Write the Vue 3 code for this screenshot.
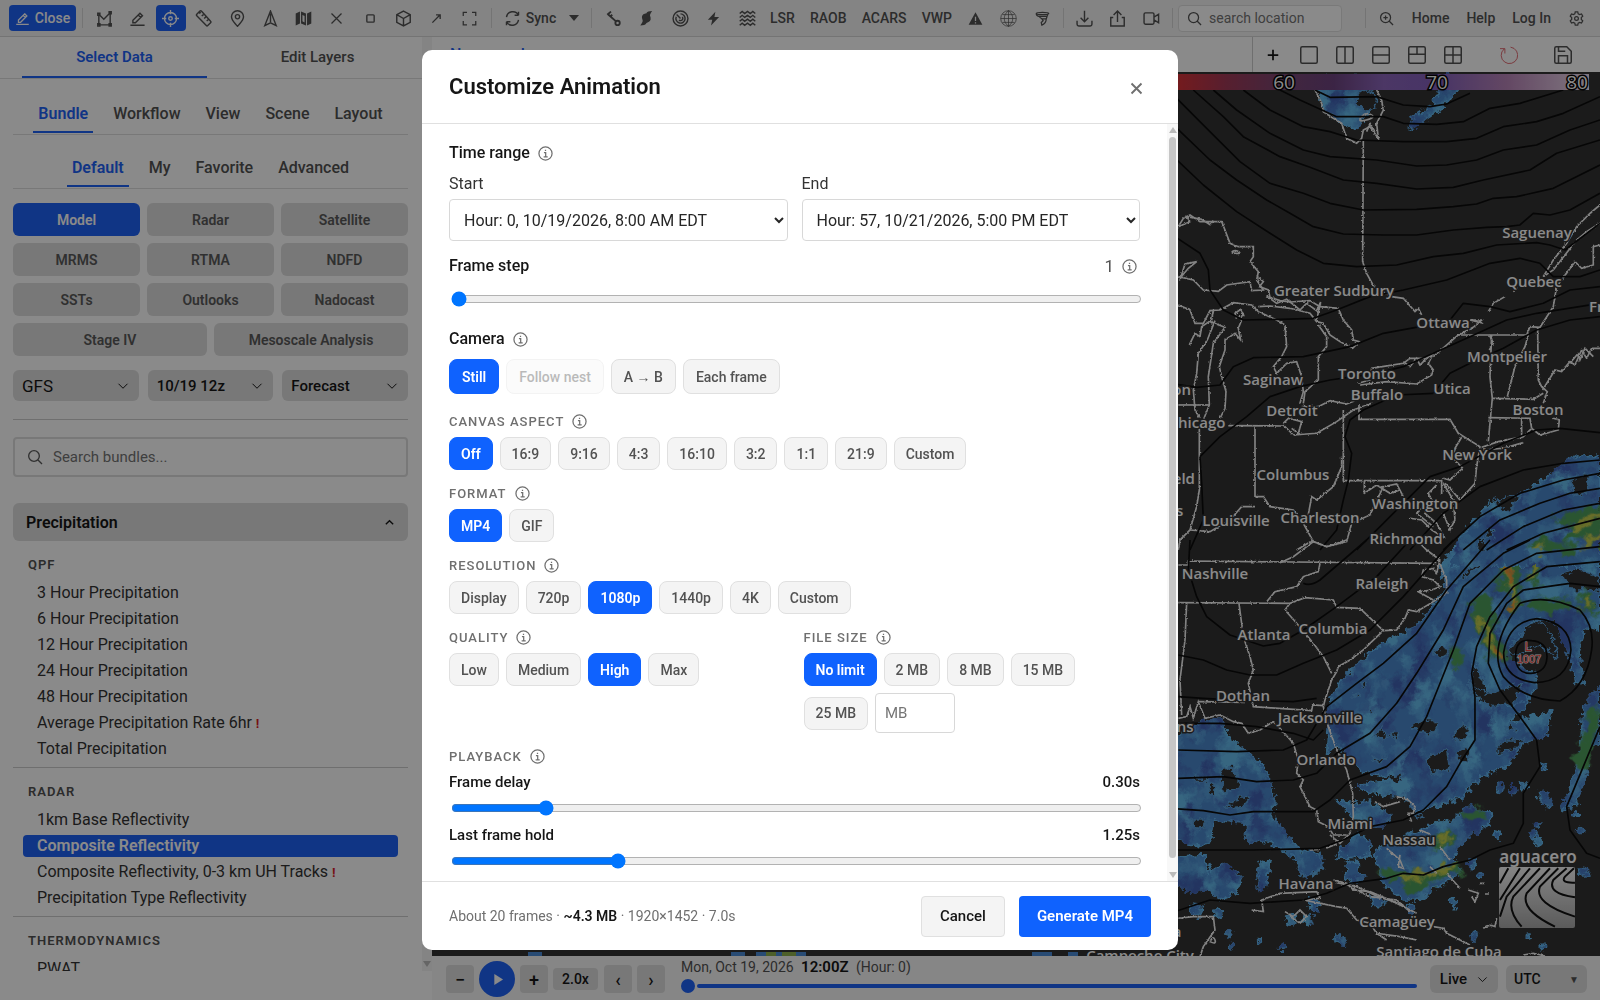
<script setup>
import { ref } from 'vue'

const icons = {
  pen: 'M15.500 4.500l3.500 3.500L9 18H5.500v-3.500zM13 7l3.500 3.500M2 21.500h20',
  area: 'M4 21V6M4 6l7 7 9-9v17H4M2.500 4.500h3v3h-3zM18.500 2.500h3v3h-3zM2.500 19.500h3v3h-3zM18.500 19.500h3v3h-3z',
  target: 'M12 3.500a8.500 8.500 0 1 0 0 17a8.500 8.500 0 1 0 0-17M12 0v6M12 18v6M0 12h6M18 12h6M12 9.500a2.500 2.500 0 1 0 0 5a2.500 2.500 0 1 0 0-5',
  ruler: 'M7 1.500L2.500 6q-1 1 0 2l13.500 14q1 1 2 0l4-4q1-1 0-2L9 1.500q-1-1-2 0zM9.500 8.500l2.500-2M13 12l2.500-2.500M16.500 15.500l2.500-2M6 5l2-2',
  pin: 'M12 23c-4-5-8.500-8.500-8.500-13.500a8.500 8.500 0 0 1 17 0C20.500 14.500 16 18 12 23zM12 6.500a3 3 0 1 0 0 6a3 3 0 1 0 0-6',
  north: 'M12 1.500L4 22l8-4 8 4zM12 5v12',
  cross: 'M4 4l16 16M20 4L4 20',
  square: 'M6 4h12a2 2 0 0 1 2 2v12a2 2 0 0 1-2 2H6a2 2 0 0 1-2-2V6a2 2 0 0 1 2-2z',
  cube: 'M12 1.500l9.500 5v11l-9.500 5-9.500-5v-11zM2.500 6.500l9.500 5.500 9.500-5.500M12 12v10.500',
  arrow: 'M3 21L20 4M11 4h9v9',
  frame: 'M8 2H2v6M16 2h6v6M8 22H2v-6M16 22h6v-6',
  sync: 'M3.500 10a9 9 0 0 1 17-2.500V2.500M20.500 7.500h-5.500M20.500 14a9 9 0 0 1-17 2.500v5M3.500 16.500h5.500',
  radar: 'M12 1.500a10.500 10.500 0 1 0 0 21a10.500 10.500 0 1 0 0-21M12 5.500a6.500 6.500 0 1 1-6 4M12 12L6.500 6.500M14.500 10a3 3 0 1 1-4.500 4',
  waves: 'M1 5l3.500-3 3.500 3 4-3 4 3 3.500-3 3.500 3M1 10.500l3.500-3 3.500 3 4-3 4 3 3.500-3 3.500 3M1 16l3.500-3 3.500 3 4-3 4 3 3.500-3 3.500 3M1 21.500l3.500-3 3.500 3 4-3 4 3 3.500-3 3.500 3',
  gauge: 'M4 6l12.500 11M2 6l6-5M6 9.500l4-3.500M18.500 15.500a3.500 3.500 0 1 0 0 7a3.500 3.500 0 1 0 0-7',
  globe: 'M12 1a11 11 0 1 0 0 22a11 11 0 1 0 0-22M12 1v22M1 12h22M12 1c-8 6-8 16 0 22M12 1c8 6 8 16 0 22M3.500 6.500h17M3.500 17.500h17',
  tornado: 'M2 4c0-2.500 20-2.500 20 0s-20 2.500-20 0c0 3 2 4 4 4.500h13l2.500-4.500M7 8.500c0 2 2 3 4 4h7l1.500-4M11 12.500l2 3-3 3 1 4c5-2 7-5 7-10',
  download: 'M12 1v15M6.500 11l5.500 5.500L17.500 11M1.500 15v5q0 2.500 2.500 2.500h16q2.500 0 2.500-2.500v-5',
  upload: 'M12 17V2M6.500 7L12 1.500 17.500 7M6 10.500H2.500v12h19v-12H18',
  video: 'M3.500 4h10q2 0 2 2v12q0 2-2 2h-10q-2 0-2-2V6q0-2 2-2zM15.500 10l6.500-4v12l-6.500-4',
  search: 'M10.500 2.500a8 8 0 1 0 0 16a8 8 0 1 0 0-16M16.500 16.500l6 6',
  zoomIn: 'M10.500 2.500a8 8 0 1 0 0 16a8 8 0 1 0 0-16M16.500 16.500l6 6M10.500 7v7M7 10.500h7',
  gear: 'M10 1.500h4l.7 3 2.300 1.300 3-1 2 3.500-2.300 2.200v3l2.300 2.200-2 3.500-3-1-2.300 1.300-.7 3h-4l-.7-3L7 18.200l-3 1-2-3.500L4.300 13.500v-3L2 8.300l2-3.500 3 1L9.300 4.500zM12 9a3 3 0 1 0 0 6a3 3 0 1 0 0-6',
  info: 'M12 1.500a10.500 10.500 0 1 0 0 21a10.500 10.500 0 1 0 0-21M9.500 10.500h2.800V17M9 17.500h6.500M12 6v2',
  chevron: 'M3 7.500l9 9 9-9',
  chevronUp: 'M4 16l8-8 8 8',
  plus: 'M12 3v18M3 12h18',
  one: 'M3 1h18q2 0 2 2v18q0 2-2 2H3q-2 0-2-2V3q0-2 2-2z',
  cols: 'M3 1h18q2 0 2 2v18q0 2-2 2H3q-2 0-2-2V3q0-2 2-2zM12 1v22',
  rows: 'M3 1h18q2 0 2 2v18q0 2-2 2H3q-2 0-2-2V3q0-2 2-2zM1 12h22',
  three: 'M3 1h18q2 0 2 2v18q0 2-2 2H3q-2 0-2-2V3q0-2 2-2zM1 11h22M12 1v10',
  four: 'M3 1h18q2 0 2 2v18q0 2-2 2H3q-2 0-2-2V3q0-2 2-2zM1 12h22M12 1v22',
  reset: 'M5.500 4A11 11 0 1 0 14 1.500M0 3.500h6.500v6.500',
  save: 'M3 1h14l6 6v14q0 2-2 2H3q-2 0-2-2V3q0-2 2-2zM6 23V13h12v10M6 1v6h9'
}
const solids = {
  map: 'M1 5l6-3v17l-6 3zM8.500 2l7 3v17l-7-3zM17 5l6-3v17l-6 3zM10.500 7v9l3 1.500v-9z',
  hurricane: 'M21 0c-5 0-8 1-9.500 4-5 0-7.500 3.500-6.500 8 .5 3 1.500 3 .5 5.500-1 2-2 4-3.500 5.500 5 0 8.500-1 10-4 5-1 7.500-4 6.500-8.500-.5-3-1.500-3.500-.5-5.500.6-1.500 1.500-3 3-5z',
  bolt: 'M15 1L3 14h7l-2 9L21 9.500h-7.500z',
  warning: 'M12 2L1 22h22zM11 9h2v7h-2zM11 18h2v2h-2z'
}

const drawTools = ['area', 'pen', 'target', 'ruler', 'pin', 'north', 'map', 'cross', 'square', 'cube', 'arrow', 'frame']
const dataTools = ['gauge', 'hurricane', 'radar', 'bolt', 'waves']
const products = ['LSR', 'RAOB', 'ACARS', 'VWP']
const hazardTools = ['warning', 'globe', 'tornado']
const shareTools = ['download', 'upload', 'video']
const layouts = ['one', 'cols', 'rows', 'three', 'four']

const mainTabs = ['Bundle', 'Workflow', 'View', 'Scene', 'Layout']
const subTabs = ['Default', 'My', 'Favorite', 'Advanced']
const sources = ['Model', 'Radar', 'Satellite', 'MRMS', 'RTMA', 'NDFD', 'SSTs', 'Outlooks', 'Nadocast']
const wideSources = ['Stage IV', 'Mesoscale Analysis']
const sections = [
  { title: 'QPF', items: ['3 Hour Precipitation', '6 Hour Precipitation', '12 Hour Precipitation', '24 Hour Precipitation', '48 Hour Precipitation', 'Average Precipitation Rate 6hr', 'Total Precipitation'] },
  { title: 'RADAR', items: ['1km Base Reflectivity', 'Composite Reflectivity', 'Composite Reflectivity, 0-3 km UH Tracks', 'Precipitation Type Reflectivity'] },
  { title: 'THERMODYNAMICS', items: ['PWAT'] }
]
const flagged = ['Average Precipitation Rate 6hr', 'Composite Reflectivity, 0-3 km UH Tracks']
const activeItem = ref('Composite Reflectivity')

const camera = ref('Still')
const cameras = ['Still', 'Follow nest', 'A → B', 'Each frame']
const aspect = ref('Off')
const aspects = ['Off', '16:9', '9:16', '4:3', '16:10', '3:2', '1:1', '21:9', 'Custom']
const format = ref('MP4')
const formats = ['MP4', 'GIF']
const resolution = ref('1080p')
const resolutions = ['Display', '720p', '1080p', '1440p', '4K', 'Custom']
const quality = ref('High')
const qualities = ['Low', 'Medium', 'High', 'Max']
const fileSize = ref('No limit')
const fileSizes = ['No limit', '2 MB', '8 MB', '15 MB', '25 MB']
const frameStep = ref(1)
const frameDelay = ref(30)
const lastHold = ref(125)

const cities = [
  ['Saguenay', 1537, 238], ['Quebec', 1534, 287], ['Greater Sudbury', 1334, 296], ['Ottawa', 1443, 328],
  ['Montpelier', 1507, 362], ['Toronto', 1367, 379], ['Saginaw', 1273, 385], ['Buffalo', 1377, 400],
  ['Utica', 1452, 394], ['Detroit', 1292, 416], ['Boston', 1538, 415], ['New York', 1477, 460],
  ['Columbus', 1293, 480], ['Washington', 1415, 509], ['Louisville', 1236, 526], ['Charleston', 1320, 523],
  ['Richmond', 1406, 544], ['Nashville', 1215, 579], ['Raleigh', 1382, 589], ['Atlanta', 1264, 640],
  ['Columbia', 1333, 634], ['Dothan', 1243, 701], ['Jacksonville', 1320, 723], ['Orlando', 1326, 765],
  ['Miami', 1350, 829], ['Nassau', 1409, 845], ['Havana', 1306, 889], ['Camagüey', 1397, 927],
  ['Santiago de Cuba', 1439, 957], ['Chicago', 1197, 428], ['Madison', 1160, 395], ['Springfield', 1156, 484],
  ['St. Louis', 1153, 516], ['New Orleans', 1147, 732], ['Mérida', 1156, 937], ['Campeche City', 1140, 961],
  ['Fredericton', 1631, 312]
]

const northContours = [
  'M435 0L480 22 620 20 700 45 780 50 830 42 900 10', 'M330 0L390 30 500 80 640 80 700 100 800 103 880 95 960 55 1050 40 1180 0',
  'M220 0L300 60 400 110 480 125 560 150 700 155 830 155 920 145 1000 110 1100 95 1180 70 1290 20',
  'M130 0L200 60 300 130 400 180 480 200 620 210 740 228 830 225 920 210 1000 180 1100 165 1200 120 1290 90',
  'M70 0L160 80 220 140 330 200 420 232 520 270 620 280 740 297 850 292 940 270 1080 240 1160 190 1290 150',
  'M0 5L110 115 210 215 300 280 400 310 480 340 580 360 740 358 850 350 920 342 970 325 1040 320 1150 295 1290 225',
  'M0 95L120 210 200 270 290 330 360 370 430 410 520 432 640 435 740 435 850 420 950 412 1010 410 1050 405 1090 370 1140 375 1200 360 1290 310',
  'M0 190L100 285 200 365 300 430 380 480 460 520 560 530 680 525 790 500 880 490 980 465 1100 458 1140 465 1185 480 1290 400',
  'M0 430L90 490 115 540 120 600 160 660 220 690 330 688 430 685 500 660 600 620 700 600 830 570 960 520 1050 505 1110 520 1150 560 1230 560 1290 540',
  'M0 880L80 892 150 885 190 830 250 803 400 800 540 770 640 730 750 710 840 690 880 640 960 650 1020 665 1120 640 1200 600 1290 590',
  'M90 1100L150 1040 230 980 300 920 390 890 480 870 620 850 700 830 790 790 900 740 1010 690 1100 670 1290 640',
  'M790 910L840 850 900 820 1000 775 1100 720 1200 690 1290 680',
  'M790 910L680 915 580 960 540 990 525 1040 545 1090 535 1170 520 1230 500 1320 450 1380', 'M60 1380L100 1290 95 1180 90 1100',
  'M560 1380L640 1300 700 1240 780 1160 870 1130 1000 1060 1100 1020 1170 1015 1290 1028',
  'M720 1380L820 1270 930 1190 1060 1140 1180 1120 1290 1110', 'M820 1380L930 1280 1050 1210 1180 1170 1290 1150',
  'M880 1380L990 1290 1110 1240 1200 1210 1290 1195', 'M950 1380L1060 1310 1180 1260 1290 1240', 'M1010 1380L1120 1330 1290 1285'
]
const southContours = [
  'M60 0L55 90 80 170 110 230 180 285 280 318 330 310 400 270 500 200 620 110 720 0', 'M400 130Q420 140 450 120L590 0',
  'M25 345L100 360 170 390 240 405 320 405 400 370 500 330 600 270 700 170 850 0', 'M25 470L100 475 200 480 370 485 440 475',
  'M25 550L150 550 260 560 370 580 430 600 460 570', 'M25 630L200 635 340 630 410 600 470 500 560 430 640 370 740 280 830 150 960 0',
  'M25 715L160 710 260 725 370 720 440 700 500 640 600 580 680 490 740 400 820 270 880 140 1000 40 1080 0',
  'M0 805L100 812 180 825 250 815 430 815 480 780 540 720 650 680 720 620 770 530 790 480 850 330 900 190 1000 90 1100 40 1290 20',
  'M0 930L250 930 450 925 520 900 600 860 700 840 760 810 830 740 870 670 915 600 915 470 905 400 920 320 960 230 1030 140 1130 80 1290 65',
  'M0 1120L120 1080 240 1090 400 1080 470 1060 540 1030 650 1015 700 1000 760 1005 820 980 900 960 960 930 1030 910 1060 850 1060 760 1110 680 1100 600 1050 530 990 450 955 370 960 280 1010 190 1060 150 1200 130 1290 140',
  'M1085 302q48 4 46 50t-48 48-46-52 48-46', 'M1100 236q100 10 103 94-8 96-110 98-92-12-92-90 15-92 99-102',
  'M1050 190Q1130 160 1230 210 1275 260 1265 330 1250 440 1170 483 1060 480 1000 410 950 320 1050 190', 'M1290 560L1240 680 1190 800 1200 870 1250 940 1290 955'
]
const northBorders = [
  'M435 0L455 40 460 65 490 85 515 100 530 145 560 160 575 145 580 120 600 110 625 145 620 100 640 60 635 30 620 0', 'M575 80q12-14 28-6t-14 16-14-10', 'M590 125L600 100 615 125',
  'M580 150L578 515 590 550 612 590 665 620 700 625 735 665 745 655 755 675',
  'M25 410L40 385 60 375 90 395 155 395 165 420 180 460 205 470 250 470 250 500 240 515 265 545 260 570 280 600 245 602 240 575 170 585 145 604 100 600 70 570 25 560',
  'M30 570L45 522 80 515 55 535 30 565', 'M185 486q12-8 22 0t-22 2', 'M25 410L60 395 50 380 95 388 120 404 130 392',
  'M262 560L280 575 268 590 295 600 300 622 330 632 360 636 420 632 450 650 505 655 520 690 545 720 550 750 568 755 548 775 510 755 480 735 460 700 440 695 420 670 360 655 300 648 265 650',
  'M290 618L320 640 350 628 390 660 410 640 440 662 452 636 440 690', 'M25 645L60 660 75 700 100 700 120 662 150 660 190 638 245 645 265 665 320 690 345 705 350 770 335 800 310 830 320 850 350 820 380 815 395 860 400 905 390 940',
  'M130 660L125 690 95 710 90 740 75 730 58 765', 'M135 692L112 750 85 790 80 850 70 900 75 960 90 985', 'M215 690L205 715 212 750 195 730 165 750 165 780 148 830 155 860 168 905 165 955 150 985',
  'M120 695L165 712 130 760 115 860 118 945 100 990', 'M445 705L470 740 470 770 445 800 445 870 405 905 400 940', 'M195 670l18-12 8 18-22 8z',
  'M340 1005L370 1035 440 1030 500 995 550 960 605 940', 'M340 1000L355 985 395 995 385 1030 365 1015', 'M395 950L445 950 480 932 530 942 575 925',
  'M565 880L600 870 605 835 700 820 720 805 770 805 790 790 775 820 790 840 785 855 740 882 650 875 570 885', 'M700 815L720 830 740 805 750 825 775 800',
  'M790 800L865 735 910 712 935 690 900 690 940 700 M955 665L970 640 1005 620 M1030 605L1045 595 M1120 560L1150 510 1190 460 1220 410 1260 370 1290 345', 'M1120 560L1150 540 1220 450 1250 425 1290 400',
  'M865 735L1070 735 1080 710 1110 712 1150 650 1160 590 1215 515 1235 535 1270 525 1270 470 1290 465', 'M965 735L960 860 967 925 955 1055', 'M958 735L970 760 958 780',
  'M1075 735L1065 770 1035 830 1012 920', 'M1103 712L1105 870 1115 890 1132 905 1120 940', 'M967 925L1090 928 1120 910', 'M955 983L1080 985 1085 1015M1055 985V1045',
  'M935 1072L985 1055 1060 1040 1085 1015 1110 1035 1165 1020 1168 990 1150 985 M940 1080L1000 1075 1060 1058', 'M1118 900L1155 840 1175 845 1200 815 1215 825 1235 780 1250 805 1265 775 1290 775',
  'M1200 820L1225 790 1230 810 1245 775 1270 800', 'M567 945V988H840L865 1030 930 1070', 'M875 1042L855 1075 850 1105 878 1135 840 1170 820 1165', 'M520 960V1172H815L815 1212', 'M930 1070L920 1130 915 1180 870 1230 845 1200 825 1180',
  'M820 1180L850 1230 855 1290 840 1320 820 1270', 'M800 1185L775 1210 790 1240 765 1270 800 1300 825 1345 785 1320 755 1290 720 1285 M760 1250L740 1270 790 1310',
  'M25 945H118', 'M175 1007L340 1008', 'M255 1010V1220L280 1220 300 1250 370 1260 400 1300 430 1355 470 1370 530 1355 545 1300 600 1275 640 1190 680 1182 700 1220',
  'M88 1015V1200L80 1250 60 1320 30 1350 25 1380', 'M515 1100L515 1130 490 1190 440 1230 425 1220 410 1300', 'M583 1172V1210L620 1185 660 1210 690 1200', 'M430 1350L380 1380', 'M60 1320L120 1325 180 1290 215 1250 255 1250'
]
const southBorders = [
  'M25 75H55V63L800 70', 'M25 188L360 190 405 173 490 180 500 202 570 205 640 272', 'M330 68L370 50 430 5 470 20 530 0', 'M450 70L445 95 400 110 380 140 315 155 290 185',
  'M50 190L45 300 30 420 35 525', 'M207 190L220 290 240 350 250 390 235 430 250 500 425 512 428 495 460 497', 'M360 190L345 210 380 250 430 310 460 350 485 400', 'M85 485L225 487',
  'M740 0L770 30 790 45 810 60 800 100 790 85 760 90 755 110 790 120 810 140 785 150 745 155 790 180 M805 60L830 120 830 160 790 185 740 215 715 210 705 235 680 270 640 272 600 310 580 330 540 360 505 380 500 395 485 420 465 480 460 500 475 560 500 630 530 690 548 760 550 830 540 880 510 910 480 885',
  'M25 535L50 530 60 500 70 535 85 485 105 535 150 525 190 545 215 550 235 580 270 570 310 545 330 565 370 610 385 660 380 700 400 720 390 740 420 800 440 810 445 845 475 860 490 885 530 885',
  'M420 930L450 928M470 924L500 912', 'M245 1110L280 1115 275 1080 330 1060 440 1055 450 1075 400 1080 500 1100 530 1105 560 1140 600 1150 620 1180 650 1200', 'M345 1115L370 1130 390 1110 410 1130 390 1150 360 1130',
  'M490 1020L530 1030 550 1050 600 1055 660 1080 740 1120 M540 1040L600 1070 680 1080 720 1115', 'M500 1028L560 1040 620 1068 700 1095', 'M620 1180L690 1190 740 1200 M790 1160L820 1165 830 1180 900 1215', 'M25 1135L70 1130 130 1130 135 1170 100 1220 90 1250', 'M120 1205q10-20 15-5t-15 5',
  'M615 785L640 800 690 785 M680 770L715 780 735 800 730 820 715 820 725 845', 'M650 925L690 960 700 985 685 980 690 945', 'M750 870L780 882M810 920L840 960M780 980L800 1000M830 1000L870 1045', 'M895 1050L925 1060 915 1085 905 1070M930 1030h14M945 1062h12M940 1165q15-15 35-5l5-25M1060 1245l30-5 35 8'
]
const fields = [
  'M805 80L880 0 1290 -20 1290 270 1250 260 1225 330 1240 430 1215 430 1200 350 1150 240 1100 235 1060 270 1040 300 1010 345 1060 390 1100 395 1100 440 1070 480 1020 500 960 470 910 370 900 440 925 490 960 465 1060 450 1080 490 1010 550 1145 515 1130 590 1060 610 1010 680 930 710 880 770 800 800 730 810 690 740 700 700 640 710 570 690 540 650 500 620 470 640 480 470 540 390 620 320 700 280 760 235 830 150z',
  'M0 600L100 545 150 535 180 600 240 640 290 690 315 770 310 830 350 880 390 930 450 940 460 990 400 1010 370 950 300 910 230 900 230 850 130 840 120 910 70 920 0 880z',
  'M0 950L100 945 120 1000 160 970 215 1010 200 1060 150 1080 110 1050 70 1060 0 1030z', 'M500 780L560 790 600 780 660 830 640 860 570 860 550 830z', 'M560 740L600 725 680 720 720 750 700 770 600 760z',
  'M560 880L600 900 600 950 500 955 520 920z', 'M530 965h35v30l20 15-35 20-25-20z', 'M610 940L650 910 740 875 800 850 850 840 890 800 970 820 950 860 900 890 850 940 870 1000 800 1040 750 1080 700 1080 640 1030z',
  'M265 970l35-10-10 80-25 10z', 'M1240 500l50-60v170l-40 20v70l-30 90-40 20 50-160z', 'M415 1075h30v40l-25-10z', 'M60 1095l40 5-10 30-30-10z', 'M495 1185l35 10-10 25-25-15z', 'M600 1065l50 15-10 20-30-5z'
]
const gaps = [
  'M1175 100L1230 90 1290 110 1290 150 1200 150z', 'M920 70L940 20 960 60 890 110 850 130z', 'M790 335l30-15 15 20-20 12z', 'M725 555l50-20 30 15-20 30-40-5z', 'M860 570l20-20 15 25-15 25-30-5z', 'M610 590l25-25 15 25zM660 580l25 0-10 20z',
  'M770 650l60-20 10 60-60 10z', 'M860 640l30-20 10 30-30 20z', 'M980 620l30-20 50 0-30 30-50 10z', 'M1070 260l40-20 40 50 10 60-50-30-40 10-30 20-20-20z', 'M150 690l40-10 20 60-50 20z', 'M120 730h12v40h-12zM70 715h40v10H70z', 'M215 770l25 5-20 25-60 5z', 'M70 840l30 0 10 20-30 5z',
  'M900 430L950 460 1060 430 1030 490 970 500 930 480z', 'M575 430l15-5 5 10-15 5zM550 465l20-5 0 12zM595 500l15 10-10 10z', 'M740 820l20 10-20 10z', 'M1040 570l-30 10 10-30z', 'M610 655l40 0-20 15z'
]
const specks = [[990, 745, 12], [1120, 770, 16], [1135, 790, 10], [1185, 795, 12], [1105, 853, 8], [1090, 885, 11], [1105, 905, 9], [983, 887, 11], [905, 970, 13], [1240, 995, 13], [1230, 870, 10], [145, 1120, 14], [360, 1138, 14], [415, 1140, 14], [183, 1220, 9], [338, 1222, 9], [270, 1203, 7], [175, 1180, 10], [1030, 750, 10], [1060, 740, 9], [1122, 1220, 8], [1075, 1188, 6], [1120, 680, 8], [936, 1005, 7], [850, 1088, 12], [915, 1188, 12], [725, 1105, 12], [1215, 820, 7]]
</script>

<template>
  <div class="app">
    <header class="topbar">
      <button class="close-edit"><svg viewBox="0 0 24 24" class="ic"><path :d="icons.pen" /></svg>Close</button>
      <i class="sep"></i>
      <div class="tools draw">
        <button v-for="t in drawTools" :key="t" class="tool" :class="{ on: t === 'target' }" :aria-label="t">
          <svg viewBox="0 0 24 24" class="ic" :class="{ solid: solids[t], small: t === 'arrow' || t === 'square', mid: t === 'cross' || t === 'frame' }"><path :d="icons[t] || solids[t]" fill-rule="evenodd" /></svg>
        </button>
      </div>
      <i class="sep"></i>
      <button class="sync"><svg viewBox="0 0 24 24" class="ic"><path :d="icons.sync" /></svg>Sync<span class="caret"></span></button>
      <i class="sep"></i>
      <div class="tools data">
        <button v-for="t in dataTools" :key="t" class="tool" :aria-label="t">
          <svg viewBox="0 0 24 24" class="ic" :class="{ solid: solids[t], bold: t === 'gauge', mid: t === 'gauge' || t === 'hurricane' || t === 'bolt' }"><path :d="icons[t] || solids[t]" /></svg>
        </button>
      </div>
      <div class="products"><button v-for="p in products" :key="p">{{ p }}</button></div>
      <div class="tools hazards">
        <button v-for="t in hazardTools" :key="t" class="tool" :aria-label="t">
          <svg viewBox="0 0 24 24" class="ic" :class="{ solid: solids[t], fine: t === 'globe', mid: t !== 'globe' }"><path :d="icons[t] || solids[t]" fill-rule="evenodd" /></svg>
        </button>
      </div>
      <i class="sep"></i>
      <div class="tools share">
        <button v-for="t in shareTools" :key="t" class="tool" :aria-label="t"><svg viewBox="0 0 24 24" class="ic"><path :d="icons[t]" /></svg></button>
      </div>
      <i class="sep"></i>
      <label class="location"><svg viewBox="0 0 24 24" class="ic mid"><path :d="icons.search" /></svg><input type="text" placeholder="search location" aria-label="search location" /></label>
      <nav class="links">
        <i class="sep"></i>
        <button class="tool" aria-label="zoom in"><svg viewBox="0 0 24 24" class="ic mid"><path :d="icons.zoomIn" /></svg></button>
        <a href="#">Home</a><a href="#">Help</a><a href="#">Log In</a>
        <button class="tool gear" aria-label="settings"><svg viewBox="0 0 24 24" class="ic mid"><path :d="icons.gear" /></svg></button>
      </nav>
    </header>

    <div class="workspace">
      <aside class="sidebar">
        <div class="panel">
          <nav class="modes"><a href="#" class="on">Select Data</a><a href="#">Edit Layers</a></nav>
          <div class="panel-body">
            <nav class="tabs"><a v-for="(t, i) in mainTabs" :key="t" href="#" :class="{ on: i === 0 }">{{ t }}</a></nav>
            <nav class="tabs"><a v-for="(t, i) in subTabs" :key="t" href="#" :class="{ on: i === 0 }">{{ t }}</a></nav>
            <div class="sources">
              <button v-for="(s, i) in sources" :key="s" :class="{ on: i === 0 }">{{ s }}</button>
            </div>
            <div class="sources wide"><button v-for="s in wideSources" :key="s">{{ s }}</button></div>
            <div class="pickers">
              <button class="big">GFS<svg viewBox="0 0 24 24" class="ic"><path :d="icons.chevron" /></svg></button>
              <button>10/19 12z<svg viewBox="0 0 24 24" class="ic"><path :d="icons.chevron" /></svg></button>
              <button>Forecast<svg viewBox="0 0 24 24" class="ic"><path :d="icons.chevron" /></svg></button>
            </div>
            <label class="search"><svg viewBox="0 0 24 24" class="ic"><path :d="icons.search" /></svg><input type="text" placeholder="Search bundles..." aria-label="Search bundles" /></label>
            <button class="group">Precipitation<svg viewBox="0 0 24 24" class="ic"><path :d="icons.chevronUp" /></svg></button>
            <section v-for="s in sections" :key="s.title" class="bundle">
              <h3>{{ s.title }}</h3>
              <ul>
                <li v-for="item in s.items" :key="item" :class="{ on: item === activeItem }" @click="activeItem = item">{{ item }} <b v-if="flagged.includes(item)">!</b></li>
              </ul>
            </section>
          </div>
        </div>
        <div class="rail"><span class="down"></span></div>
      </aside>

      <main class="stage">
        <div class="viewbar">
          <span class="view-name">New panel</span>
          <div class="view-tools">
            <button class="tool add" aria-label="add view"><svg viewBox="0 0 24 24" class="ic bold"><path :d="icons.plus" /></svg></button>
            <button v-for="l in layouts" :key="l" class="tool" :aria-label="l"><svg viewBox="0 0 24 24" class="ic"><path :d="icons[l]" /></svg></button>
            <button class="tool reset" aria-label="reset"><svg viewBox="0 0 24 24" class="ic"><path :d="icons.reset" /></svg></button>
            <button class="tool save" aria-label="save"><svg viewBox="0 0 24 24" class="ic"><path :d="icons.save" /></svg></button>
          </div>
        </div>
        <svg class="map" viewBox="432 72 1168 884" preserveAspectRatio="xMaxYMin slice">
          <defs>
            <filter id="rough" x="-5%" y="-5%" width="110%" height="110%"><feTurbulence type="fractalNoise" baseFrequency="0.06" numOctaves="3" seed="4" /><feDisplacementMap in="SourceGraphic" scale="30" xChannelSelector="R" yChannelSelector="G" /></filter>
            <filter id="mottle" x="0" y="0" width="100%" height="100%" color-interpolation-filters="sRGB">
              <feTurbulence type="fractalNoise" baseFrequency="0.014 0.010" numOctaves="3" seed="21" result="n" />
              <feColorMatrix in="n" type="matrix" values="0 0 0 0 .40  0 0 0 0 .74  0 0 0 0 .93  4 0 0 0 -1.9" result="light" />
              <feColorMatrix in="n" type="matrix" values="0 0 0 0 .26  0 0 0 0 .38  0 0 0 0 .70  0 4 0 0 -1.9" result="dark" />
              <feComposite in="light" in2="SourceAlpha" operator="in" result="l" />
              <feComposite in="dark" in2="SourceAlpha" operator="in" result="d" />
              <feMerge><feMergeNode in="SourceGraphic" /><feMergeNode in="d" /><feMergeNode in="l" /></feMerge>
            </filter>
            <filter id="ragged" x="-5%" y="-5%" width="110%" height="110%"><feTurbulence type="fractalNoise" baseFrequency="0.15" numOctaves="2" seed="9" /><feDisplacementMap in="SourceGraphic" scale="8" xChannelSelector="R" yChannelSelector="G" /></filter>
            <filter id="soft" x="-20%" y="-20%" width="140%" height="140%"><feGaussianBlur stdDeviation="5" result="b" /><feTurbulence type="fractalNoise" baseFrequency="0.03" numOctaves="3" seed="2" result="n" /><feDisplacementMap in="b" in2="n" scale="60" xChannelSelector="R" yChannelSelector="G" /></filter>
            <linearGradient id="dbz" gradientUnits="userSpaceOnUse" x1="1178" x2="1589" y1="0" y2="0">
              <stop offset="0" stop-color="#d63238" /><stop offset=".12" stop-color="#a03a58" /><stop offset=".25" stop-color="#7a4672" /><stop offset=".38" stop-color="#6e4480" /><stop offset=".5" stop-color="#8c66bb" /><stop offset=".63" stop-color="#8460bc" /><stop offset=".8" stop-color="#b884b8" /><stop offset="1" stop-color="#ecdcec" />
            </linearGradient>
            <linearGradient id="stone" x1="0" x2="0" y1="0" y2="1"><stop offset="0" stop-color="#f5f5f5" /><stop offset="1" stop-color="#a9a9a9" /></linearGradient>
          </defs>
          <rect x="0" y="0" width="1600" height="1000" fill="#333" />
          <g transform="translate(1170 540) scale(.3333)">
            <g filter="url(#rough)">
              <g class="field" filter="url(#mottle)"><path v-for="f in fields" :key="f" :d="f" /><circle v-for="(s, i) in specks" :key="i" :cx="s[0]" :cy="s[1]" :r="s[2]" /></g>
              <g class="gap"><path v-for="f in gaps" :key="f" :d="f" /></g>
            </g>
            <g filter="url(#soft)" class="rain">
              <path class="g" d="M1000 130L1030 60 1035 200M1085 20L1095 120M1190 10L1290 40M920 210L940 260 975 340M940 180L960 280 1000 350M1245 170l10 40M860 340v30M1265 520v60M1255 590l-20 80M650 1000L760 1020 860 985M720 1040L760 1030M800 915L840 885M900 830l30-10M1190 190l-50 10-50-10" />
              <path class="y" d="M1015 80L1030 200M1090 40v70M1190 20l100 25M930 240L960 300 985 350M700 1015L850 985M810 905l25-20M1250 185v20" />
              <path class="o" d="M1020 90v30M1028 185v20M1205 40l15 0M985 335v20" />
            </g>
          </g>
          <g transform="translate(1170 90) scale(.3333)">
            <g filter="url(#rough)">
              <g class="field" filter="url(#mottle)">
                <path d="M435 -40H600L580 20 600 60 560 120 530 110 490 80 460 50z" /><path d="M830 -60L870 -10 820 50 740 110 718 115 725 85 780 50 810 0z" />
                <path d="M835 1430L870 1340 960 1240 1010 1230 1090 1190 1170 1130 1210 1100 1290 1095V1430z" />
              </g>
              <g class="gap"><path d="M980 1225L1050 1215 1020 1265 985 1250zM1215 1160l40-8 0 50-30 20-20-20zM950 1320h18v20h-18zM930 1350l12-10 5 40-25 10z" /><circle cx="590" cy="30" r="30" /></g>
            </g>
            <g filter="url(#soft)" class="rain"><path class="g" d="M1180 1290L1290 1260M1200 1340L1290 1300M1090 1360L1200 1380M1220 1290l40 60" /><path class="y" d="M1220 1310L1290 1275M1090 1372L1110 1380M1250 1360L1290 1330" /></g>
            <g filter="url(#ragged)" class="border"><path v-for="b in northBorders" :key="b" :d="b" /></g>
            <g class="contour"><path v-for="c in northContours" :key="c" :d="c" /></g>
          </g>
          <g transform="translate(1170 540) scale(.3333)">
            <g filter="url(#ragged)" class="border"><path v-for="b in southBorders" :key="b" :d="b" /></g>
            <g class="contour"><path v-for="c in southContours" :key="c" :d="c" /></g>
          </g>
          <path class="sliver" d="M528 954h14M731 954h14M756 954h50M1032 954h20M1068 954h10" />
          <path class="sliver green" d="M766 954h10M782 954h14" />
          <text v-for="c in cities" :key="c[0]" class="city" :x="c[1]" :y="c[2]">{{ c[0] }}</text>
          <text class="low" x="1528" y="651">L</text><text class="low num" x="1529" y="663">1007</text>
          <rect x="1000" y="74" width="589" height="16" fill="url(#dbz)" />
          <text class="dbz" x="1284" y="89">60</text><text class="dbz" x="1437" y="89">70</text><text class="dbz" x="1577" y="89">80</text>
          <text class="brand" x="1538" y="863">aguacero</text>
          <rect x="1499" y="867" width="76" height="61" rx="2" fill="url(#stone)" />
          <g transform="translate(1170 540) scale(.3333)" class="strata"><path d="M1015 985L990 1030M1050 985L990 1080M1080 985L1010 1070 990 1130M1110 985L1030 1070Q1010 1110 1055 1160M1140 985L1070 1060Q1050 1110 1155 1160M1165 985L1110 1040Q1090 1090 1215 1130M1190 985L1150 1020Q1130 1060 1215 1072M1212 985L1185 1010Q1170 1030 1215 1028" /></g>
        </svg>
        <footer class="playbar">
          <button class="step">−</button>
          <button class="play" aria-label="play"><svg viewBox="0 0 24 24"><path d="M8 5v14l11-7z" /></svg></button>
          <button class="step">+</button>
          <button class="speed">2.0x</button>
          <button class="step">‹</button>
          <button class="step">›</button>
          <div class="timeline">
            <p>Mon, Oct 19, 2026 <b>12:00Z</b> (Hour: 0)</p>
            <div class="track"><i class="knob"></i><i class="bar"></i></div>
          </div>
          <button class="live">Live<svg viewBox="0 0 24 24" class="ic"><path :d="icons.chevron" /></svg></button>
          <button class="utc">UTC<span>▼</span></button>
        </footer>
      </main>
    </div>

    <div class="overlay">
      <div class="dialog" role="dialog" aria-labelledby="dlg-title">
        <header class="dlg-head"><h2 id="dlg-title">Customize Animation</h2><button aria-label="close"><svg viewBox="0 0 24 24" class="ic"><path :d="icons.cross" /></svg></button></header>
        <div class="dlg-mid">
          <div class="dlg-body">
            <h3 class="head">Time range<svg viewBox="0 0 24 24" class="ic"><path :d="icons.info" /></svg></h3>
            <div class="range">
              <label>Start<select><option>Hour: 0, 10/19/2026, 8:00 AM EDT</option></select></label>
              <label>End<select><option>Hour: 57, 10/21/2026, 5:00 PM EDT</option></select></label>
            </div>
            <label class="head row" for="step"><span>Frame step</span><span class="value">{{ frameStep }}<svg viewBox="0 0 24 24" class="ic"><path :d="icons.info" /></svg></span></label>
            <input id="step" v-model="frameStep" class="slider step-slider" type="range" min="1" max="10" />
            <h3 class="head camera">Camera<svg viewBox="0 0 24 24" class="ic"><path :d="icons.info" /></svg></h3>
            <div class="chips tall"><button v-for="o in cameras" :key="o" :disabled="o === 'Follow nest'" :class="{ on: o === camera }" @click="camera = o">{{ o }}</button></div>
            <h4>CANVAS ASPECT<svg viewBox="0 0 24 24" class="ic"><path :d="icons.info" /></svg></h4>
            <div class="chips"><button v-for="o in aspects" :key="o" :class="{ on: o === aspect }" @click="aspect = o">{{ o }}</button></div>
            <h4>FORMAT<svg viewBox="0 0 24 24" class="ic"><path :d="icons.info" /></svg></h4>
            <div class="chips"><button v-for="o in formats" :key="o" :class="{ on: o === format }" @click="format = o">{{ o }}</button></div>
            <h4>RESOLUTION<svg viewBox="0 0 24 24" class="ic"><path :d="icons.info" /></svg></h4>
            <div class="chips"><button v-for="o in resolutions" :key="o" :class="{ on: o === resolution }" @click="resolution = o">{{ o }}</button></div>
            <div class="pair">
              <div>
                <h4>QUALITY<svg viewBox="0 0 24 24" class="ic"><path :d="icons.info" /></svg></h4>
                <div class="chips"><button v-for="o in qualities" :key="o" :class="{ on: o === quality }" @click="quality = o">{{ o }}</button></div>
              </div>
              <div>
                <h4>FILE SIZE<svg viewBox="0 0 24 24" class="ic"><path :d="icons.info" /></svg></h4>
                <div class="chips sizes"><button v-for="o in fileSizes" :key="o" :class="{ on: o === fileSize }" @click="fileSize = o">{{ o }}</button><input type="text" placeholder="MB" aria-label="File size in MB" /></div>
              </div>
            </div>
            <h4>PLAYBACK<svg viewBox="0 0 24 24" class="ic"><path :d="icons.info" /></svg></h4>
            <label class="row timing" for="delay"><span>Frame delay</span><span>{{ (frameDelay / 100).toFixed(2) }}s</span></label>
            <input id="delay" v-model="frameDelay" class="slider" type="range" min="5" max="200" />
            <label class="row timing" for="hold"><span>Last frame hold</span><span>{{ (lastHold / 100).toFixed(2) }}s</span></label>
            <input id="hold" v-model="lastHold" class="slider" type="range" min="5" max="513" />
          </div>
          <div class="scroller"><span class="up"></span><i></i><span class="down"></span></div>
        </div>
        <footer class="dlg-foot">
          <p>About 20 frames · <b>~4.3 MB</b> · 1920×1452 · 7.0s</p>
          <button class="cancel">Cancel</button><button class="go">Generate MP4</button>
        </footer>
      </div>
    </div>
  </div>
</template>

<style>
html, body { margin: 0; background: #fff; }
</style>

<style scoped>
* { box-sizing: border-box; }
.app { height: 100vh; display: flex; flex-direction: column; overflow: hidden; font-family: Roboto, "Noto Sans", sans-serif; font-size: 16px; color: #161616; }
button, input, select { font: inherit; color: inherit; margin: 0; }
button { border: 0; background: none; padding: 0; display: inline-flex; align-items: center; justify-content: center; white-space: nowrap; flex-shrink: 0; }
a { color: inherit; text-decoration: none; }
h2, h3, h4, p, ul { margin: 0; padding: 0; list-style: none; }
.ic { width: 16px; height: 16px; fill: none; stroke: currentColor; stroke-width: 2; flex-shrink: 0; }
.ic.solid { fill: currentColor; stroke: none; }
.ic.bold { stroke-width: 3; }
.ic.fine { stroke-width: 1; }

.topbar { height: 37px; flex-shrink: 0; display: flex; align-items: center; background: #f4f4f4; border-bottom: 1px solid #d6d6d6; padding-left: 9px; font-size: 14px; font-weight: 500; color: #525252; }
.topbar .ic { width: 17px; height: 17px; }
.topbar .ic.mid { width: 15px; height: 15px; }
.topbar .ic.small { width: 11px; height: 11px; stroke-width: 3; }
.topbar .close-edit .ic { width: 15px; height: 15px; }
.sep { width: 1px; height: 20px; background: #d6d6d6; flex-shrink: 0; }
.close-edit { width: 67px; height: 26px; gap: 5px; border-radius: 4px; background: #1f62f5; color: #fff; margin-right: 6px; }
.tools { display: flex; justify-content: space-between; flex-shrink: 0; }
.tool { width: 30px; height: 26px; border-radius: 4px; }
.tool.on { background: #1f62f5; color: #fff; }
.draw { width: 396px; margin: 0 6px; }
.sync { width: 99px; gap: 5px; }
.caret { border: 5px solid transparent; border-top: 6px solid #525252; border-bottom: 0; margin-left: 8px; }
.data { width: 164px; margin: 0 8px 0 6px; }
.products { width: 182px; display: flex; justify-content: space-between; flex-shrink: 0; }
.hazards { width: 97px; margin: 0 6px 0 8px; }
.share { width: 97px; margin: 0 6px 0 5px; }
.location { display: flex; align-items: center; gap: 7px; width: 164px; height: 27px; margin-left: 5px; padding-left: 8px; background: #fff; border: 1px solid #e0e0e0; border-radius: 4px; flex-shrink: 0; }
input { border: 0; outline: 0; background: none; min-width: 0; }
.location input { width: 120px; padding: 0; font-weight: 400; }
input::placeholder { color: #757575; opacity: 1; }
.links { margin-left: auto; display: flex; align-items: center; gap: 17px; padding-right: 9px; }
.links .sep { margin-right: -11px; }
.links .tool { margin-right: -7px; }
.links .gear { margin: 0 0 0 -7px; }

.workspace { flex: 1; min-height: 0; display: flex; }
.sidebar { width: 432px; flex-shrink: 0; display: flex; }
.panel { flex: 1; min-width: 0; height: 100%; padding-bottom: 29px; display: flex; flex-direction: column; }
.modes { height: 42px; flex-shrink: 0; display: flex; padding: 0 12px 0 22px; gap: 18px; border-bottom: 1px solid #dedede; font-size: 15px; font-weight: 500; color: #525252; }
.modes a { flex: 1; display: flex; align-items: center; justify-content: center; border-bottom: 2px solid transparent; }
.modes .on, .tabs .on { color: #1f62f5; border-bottom-color: #1f62f5; font-weight: 600; }
.panel-body { flex: 1; min-height: 0; overflow: hidden; padding: 16px 14px 0 13px; }
.tabs { height: 40px; display: flex; justify-content: center; gap: 15px; border-bottom: 1px solid #dedede; margin-bottom: 14px; font-weight: 500; color: #525252; }
.tabs a { padding: 0 5px; display: flex; align-items: center; height: 38px; border-bottom: 2px solid transparent; }
.sources { display: grid; grid-template-columns: repeat(3, 1fr); gap: 7px; font-size: 14px; font-weight: 600; color: #5a5a5a; }
.sources.wide { grid-template-columns: 1fr 1fr; margin-top: 7px; }
.sources button, .pickers button { height: 33px; background: #dedede; border-radius: 6px; }
.sources .on { background: #1f62f5; color: #fff; }
.pickers { display: grid; grid-template-columns: repeat(3, 1fr); gap: 9px; margin-top: 14px; padding-bottom: 18px; border-bottom: 1px solid #cecece; font-size: 15px; font-weight: 500; }
.pickers button { height: 31px; justify-content: space-between; padding: 0 10px 0 9px; }
.pickers .big { font-size: 17px; font-weight: 400; }
.pickers .ic { width: 12px; height: 12px; }
.search { display: flex; align-items: center; gap: 10px; height: 40px; margin-top: 17px; border: 2px solid #dedede; border-radius: 4px; padding-left: 12px; font-size: 15px; color: #5a5a5a; }
.search input { flex: 1; padding: 0; }
.group { display: flex; width: 100%; height: 38px; margin-top: 26px; padding: 0 13px; justify-content: space-between; background: #dedede; border-radius: 6px; font-weight: 600; }
.group .ic { width: 11px; height: 11px; stroke-width: 3; }
.bundle { border-bottom: 1px solid #cecece; padding-bottom: 3px; }
.bundle h3 { font-size: 13px; line-height: 18px; font-weight: 600; letter-spacing: 1px; color: #525252; padding: 15px 0 6px 15px; }
.bundle li { height: 22px; line-height: 22px; margin: 2px 10px 4px; padding-left: 14px; border-radius: 4px; color: #333; white-space: nowrap; }
.bundle .on { background: #1f62f5; color: #fff; font-weight: 600; }
.bundle b { color: #da1e28; font-size: 13px; }
.rail { width: 10px; margin-bottom: 29px; background: #f4f4f4; display: flex; align-items: flex-end; justify-content: center; padding-bottom: 4px; }
.up, .down { border: 4px solid transparent; }
.down { border-top: 6px solid #bbb; border-bottom: 0; }
.up { border-bottom: 6px solid #bbb; border-top: 0; }

.stage { flex: 1; min-width: 0; display: flex; flex-direction: column; }
.viewbar { height: 35px; flex-shrink: 0; display: flex; justify-content: space-between; align-items: center; padding-left: 18px; color: #525252; }
.view-name { color: #1f62f5; font-weight: 500; }
.view-tools { height: 100%; display: flex; align-items: center; border-left: 1px solid #cecece; padding: 0 22px 0 5px; gap: 6px; }
.view-tools .ic { width: 18px; height: 18px; }
.view-tools .add { color: #161616; }
.view-tools .add .ic { width: 14px; height: 14px; }
.view-tools .reset { color: #da3e48; margin: 0 18px 0 20px; }
.view-tools .reset .ic { stroke-width: 1; }
.map { flex: 1; min-height: 0; width: 100%; display: block; }
.field { fill: #4b88cc; stroke: #62b5ee; stroke-width: 5; }
.gap { fill: #333; stroke: #5a9fd8; stroke-width: 5; }
.rain path { fill: none; stroke-linecap: round; stroke-linejoin: round; }
.rain .g { stroke: #4f9e5c; stroke-width: 36; }
.rain .y { stroke: #c4cc4c; stroke-width: 18; }
.rain .o { stroke: #f08a30; stroke-width: 12; }
.border path { fill: none; stroke: #f0f0f0; stroke-width: 5; }
.contour path { fill: none; stroke: #0c0c0c; stroke-width: 5; stroke-linejoin: round; }
.strata path { fill: none; stroke: #111; stroke-width: 6; }
.sliver { stroke: #4b8bd6; stroke-width: 4; }
.sliver.green { stroke: #8fb04c; }
text { text-anchor: middle; paint-order: stroke; stroke: #333; stroke-width: 3px; }
.city { font: 600 15px "Open Sans", sans-serif; fill: #fff; }
.low { font: 13px "Liberation Sans", sans-serif; fill: #f04040; stroke: #fff; stroke-width: 1px; }
.low.num { font-size: 11px; }
.dbz { font: 19px "Open Sans", sans-serif; fill: #fff; stroke: #000; stroke-width: 3px; }
.brand { font: 600 17px "Noto Sans", sans-serif; fill: #fff; }

.playbar { height: 44px; flex-shrink: 0; display: flex; align-items: center; padding: 2px 13px 0 14px; background: #f8f8f8; font-size: 15px; font-weight: 500; }
.step { width: 28px; height: 28px; background: #dedede; border-radius: 4px; font-size: 18px; }
.play { width: 36px; height: 36px; border-radius: 50%; background: #1f62f5; margin: 0 5px; }
.play svg { width: 19px; height: 19px; fill: #fff; }
.speed { width: 45px; height: 22px; margin: 0 6px 0 5px; background: #dedede; border-radius: 4px; font-size: 14px; }
.speed + .step { margin-right: 5px; }
.timeline { flex: 1; margin: 0 13px 0 16px; font-size: 14px; font-weight: 400; color: #525252; align-self: flex-start; }
.timeline p { line-height: 18px; }
.timeline b { margin: 0 4px; color: #161616; font-size: 15px; font-weight: 600; }
.track { display: flex; align-items: center; gap: 2px; height: 20px; }
.knob { width: 14px; height: 14px; border-radius: 50%; background: #1f62f5; }
.bar { flex: 1; height: 4px; background: #1f62f5; border-radius: 2px; }
.live, .utc { height: 28px; background: #dedede; border-radius: 6px; }
.live { width: 68px; gap: 10px; margin-right: 8px; }
.live .ic { width: 11px; height: 11px; }
.utc { width: 81px; justify-content: space-between; padding: 0 8px; font-size: 14px; }
.utc span { font-size: 10px; color: #525252; }

.overlay { position: fixed; inset: 0; display: flex; align-items: center; justify-content: center; background: rgba(0, 0, 0, .46); }
.dialog { width: min(756px, 96vw); height: 90vh; display: flex; flex-direction: column; background: #fff; border-radius: 10px; overflow: hidden; }
.dlg-head { height: 74px; flex-shrink: 0; display: flex; align-items: center; justify-content: space-between; padding: 0 34px 0 27px; border-bottom: 1px solid #e0e0e0; }
.dlg-head h2 { font-size: 22px; font-weight: 600; color: #161616; }
.dlg-head button { color: #6f6f6f; margin-top: 4px; }
.dlg-head .ic { width: 15px; height: 15px; stroke-width: 3; }
.dlg-mid { flex: 1; min-height: 0; display: flex; }
.dlg-body { flex: 1; min-width: 0; overflow: hidden; padding: 18px 27px 0; }
.scroller { width: 11px; background: #f8f8f8; display: flex; flex-direction: column; align-items: center; justify-content: space-between; gap: 4px; padding: 3px 0; }
.scroller i { flex: 1; width: 7px; border-radius: 4px; background: #c6c6c6; margin-bottom: 10px; }
.head { display: flex; align-items: center; font-size: 16px; line-height: 22px; font-weight: 500; }
.head .ic, h4 .ic { width: 15px; height: 15px; margin-left: 8px; color: #6f6f6f; }
.range { display: flex; gap: 14px; margin: 10px 0 14px; }
.range label { flex: 1; line-height: 20px; color: #333; }
.range select { display: block; width: 100%; height: 42px; margin-top: 5px; padding: 0 0 0 10px; border: 1px solid #d8d8d8; border-radius: 4px; background: #fff; color: #262626; }
.row { display: flex; justify-content: space-between; }
.value { display: flex; align-items: center; font-weight: 400; font-size: 17px; color: #525252; padding-right: 3px; }
.slider { display: block; width: 100%; height: 16px; margin: 0 2px; }
.step-slider { margin-top: 14px; }
.camera { margin-top: 21px; }
.chips { display: flex; flex-wrap: wrap; gap: 7px; }
.chips button { height: 33px; padding: 0 11px; border: 1px solid #e0e0e0; border-radius: 8px; background: #f4f4f4; color: #525252; font-size: 14px; font-weight: 500; }
.chips.tall { margin: 9px 0 18px; }
.chips.tall button { height: 35px; padding: 0 12px; }
.chips .on { background: #0f62fe; border-color: #0f62fe; color: #fff; font-weight: 600; }
.chips button:disabled { opacity: .4; }
h4 { display: flex; align-items: center; height: 18px; margin: 14px 0 7px; font-size: 13px; font-weight: 500; letter-spacing: 1px; color: #6f6f6f; }
.pair { display: grid; grid-template-columns: 1fr 1fr; gap: 18px; }
.sizes { align-items: center; max-width: 300px; }
.sizes input { width: 80px; height: 40px; border: 1px solid #d8d8d8; border-radius: 4px; padding: 0 9px; font-size: 15px; }
.timing { font-size: 15px; line-height: 20px; font-weight: 500; margin: 7px 0 8px; }
.slider + .timing { margin-top: 9px; }
.dlg-foot { height: 69px; flex-shrink: 0; display: flex; align-items: center; gap: 14px; padding: 0 27px; border-top: 1px solid #e0e0e0; }
.dlg-foot p { flex: 1; font-size: 14px; color: #6f6f6f; }
.dlg-foot p b { color: #161616; font-weight: 600; }
.dlg-foot button { height: 41px; padding: 0 18px; border-radius: 4px; font-size: 15px; font-weight: 500; }
.cancel { background: #f4f4f4; border: 1px solid #e0e0e0; }
.dlg-foot .go { background: #0f62fe; color: #fff; font-weight: 600; }
</style>
